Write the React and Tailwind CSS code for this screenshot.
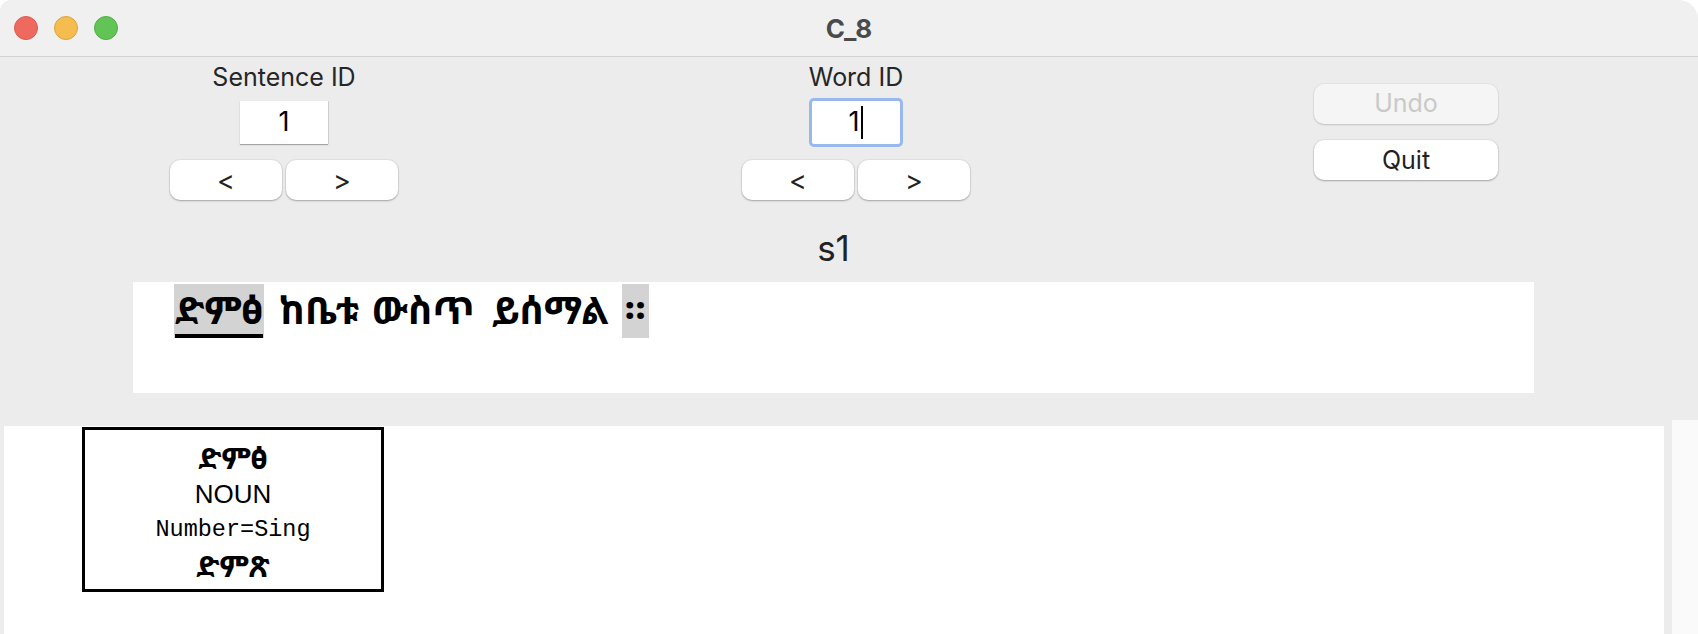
import React from "react";

const ui = { fontFamily: "Inter, 'Liberation Sans', sans-serif" };
const eth = { fontFamily: "'Noto Sans Ethiopic', 'Abyssinica SIL', 'Noto Serif Ethiopic', 'DejaVu Sans', 'FreeSerif', serif" };

function MacButton({ children, className = "" }) {
  return (
    <div
      className={
        "flex items-center justify-center rounded-[10px] bg-white text-[#222] text-[25px] leading-none shadow-[0_1px_2px_rgba(0,0,0,0.28),0_0_0_1px_rgba(0,0,0,0.04)] " +
        className
      }
    >
      {children}
    </div>
  );
}

function Spinner({ label, focused }) {
  return (
    <div className="flex flex-col items-center pt-[5px]">
      <div className="text-[25px] leading-[30px] text-[#262626]">{label}</div>
      {focused ? (
        <div className="mt-[9px] flex h-[43px] w-[88px] items-center justify-center rounded-[2px] bg-white text-[27px] text-black ring-[3px] ring-[#98b9ee]">
          <span>1</span>
          <span className="ml-[2px] h-[33px] w-[2px] bg-black" />
        </div>
      ) : (
        <div className="mt-[9px] flex h-[43px] w-[88px] items-center justify-center bg-white text-[27px] text-black shadow-[0_1px_1px_rgba(0,0,0,0.3),1px_0_0_rgba(0,0,0,0.08)]">
          1
        </div>
      )}
      <div className="mt-[16px] flex gap-[4px]">
        <MacButton className="h-[40px] w-[112px] text-[27px]">&lt;</MacButton>
        <MacButton className="h-[40px] w-[112px] text-[27px]">&gt;</MacButton>
      </div>
    </div>
  );
}

export default function App() {
  return (
    <div className="h-[634px] w-[1698px] overflow-hidden bg-white" style={ui}>
      <div className="flex h-full flex-col overflow-hidden rounded-tl-[12px] rounded-tr-[20px] bg-[#ececec]">
        {/* Title bar */}
        <div className="relative flex h-[57px] shrink-0 items-center border-b border-[#d2d2d2] bg-[#f0f0f0]">
          <div className="flex gap-[16px] pl-[14px]">
            <div className="h-[24px] w-[24px] rounded-full border border-[#dc5a4f] bg-[#ee6a5f]" />
            <div className="h-[24px] w-[24px] rounded-full border border-[#dca33f] bg-[#f5bd4f]" />
            <div className="h-[24px] w-[24px] rounded-full border border-[#4fae45] bg-[#61c454]" />
          </div>
          <div className="absolute inset-x-0 top-0 flex h-full items-center justify-center text-[26px] font-bold text-[#4a4a4a]">
            C_8
          </div>
        </div>

        {/* Controls */}
        <div className="flex h-[171px] shrink-0">
          <div className="w-[568px]">
            <Spinner label="Sentence ID" />
          </div>
          <div className="w-[576px]">
            <Spinner label="Word ID" focused />
          </div>
          <div className="flex w-[524px] flex-col items-center pt-[27px]">
            <div className="flex h-[40px] w-[184px] items-center justify-center rounded-[10px] bg-[#f5f5f5] text-[25px] text-[#c9c9c9] shadow-[0_1px_2px_rgba(0,0,0,0.15),0_0_0_1px_rgba(0,0,0,0.03)]">
              Undo
            </div>
            <MacButton className="mt-[16px] h-[40px] w-[184px]">Quit</MacButton>
          </div>
        </div>

        {/* Sentence label and text */}
        <div className="shrink-0 pl-[133px] pr-[164px]">
          <div className="text-center text-[35px] leading-[40px] text-[#222]">s1</div>
          <div className="mt-[14px] h-[111px] bg-white pl-[41px] pt-[2px]">
            <div className="flex items-start text-[38px] font-bold leading-[50px] text-black" style={eth}>
              <span className="bg-[#d3d3d3] px-[1px]">
                <span className="block border-b-[4px] border-black">ድምፅ</span>
              </span>
              <span className="ml-[15px]">ከቤቱ</span>
              <span className="ml-[13px]">ውስጥ</span>
              <span className="ml-[17px]">ይሰማል</span>
              <span className="ml-[13px] bg-[#d3d3d3] px-[3px] pb-[4px]">።</span>
            </div>
          </div>
        </div>

        {/* Tree canvas */}
        <div className="flex min-h-0 flex-1">
          <div className="flex-1 pl-[4px] pt-[33px]">
            <div className="h-full w-[1660px] bg-white pl-[78px] pt-[1px]">
              <div className="flex h-[165px] w-[302px] flex-col items-center border-[3px] border-black pt-[10px] text-black">
                <div className="text-[30px] font-bold leading-[36px]" style={eth}>ድምፅ</div>
                <div className="text-[26px] leading-[36px]" style={{ fontFamily: "'Liberation Sans', Arial, sans-serif" }}>NOUN</div>
                <div className="text-[23.5px] leading-[36px]" style={{ fontFamily: "'Liberation Mono', 'Courier New', monospace" }}>Number=Sing</div>
                <div className="text-[30px] font-bold leading-[36px]" style={eth}>ድምጽ</div>
              </div>
            </div>
          </div>
          <div className="ml-[8px] mt-[27px] w-[26px] bg-[#fafafa]" />
        </div>
      </div>
    </div>
  );
}
